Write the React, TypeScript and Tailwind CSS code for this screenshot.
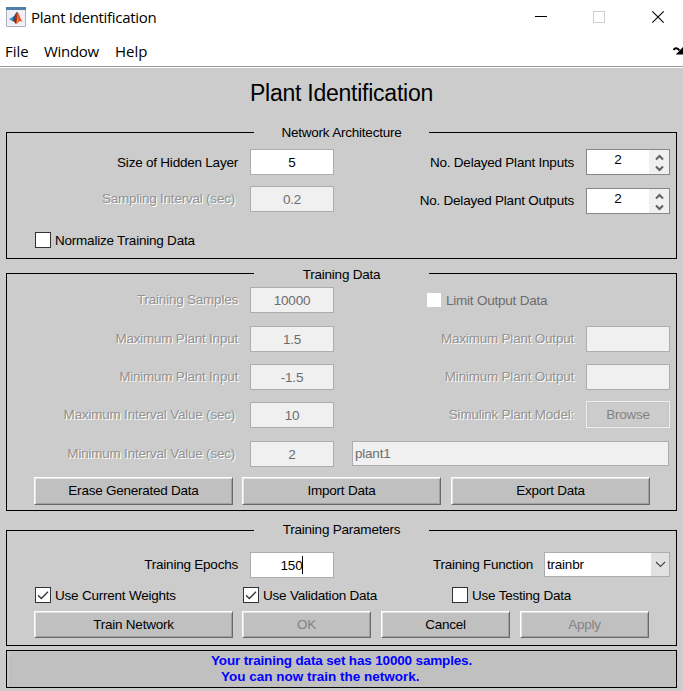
import type { ReactNode } from "react";

function Check({ checked }: { checked?: boolean }) {
  return (
    <span className="flex h-4 w-4 shrink-0 items-center justify-center border border-[#333] bg-white">
      {checked && (
        <svg width="14" height="14" viewBox="0 0 14 14" fill="none" stroke="#333" strokeWidth="1.3">
          <path d="M2 7.2 L5.3 10.5 L12 3.8" />
        </svg>
      )}
    </span>
  );
}

function Option({ checked, className, children }: { checked?: boolean; className: string; children: ReactNode }) {
  return (
    <div className={`flex h-4 items-center gap-1 ${className}`}>
      <Check checked={checked} />
      <span className="pt-px">{children}</span>
    </div>
  );
}

function Label({ off, sec, className = "pr-3", children }: { off?: boolean; sec?: boolean; className?: string; children: ReactNode }) {
  return (
    <span
      className={`flex-1 text-right ${sec ? "pr-[15px]" : className} ${
        off ? "text-[#929292] [text-shadow:1px_1px_0_#fff]" : "pt-px"
      }`}
    >
      {children}
    </span>
  );
}

function Field({ off, children }: { off?: boolean; children?: ReactNode }) {
  return (
    <span
      className={`flex h-[26px] w-[84px] shrink-0 items-center justify-center border border-[#abadb3] pt-px ${
        off ? "bg-[#f0f0f0] text-[#6d6d6d]" : "bg-white"
      }`}
    >
      {children}
    </span>
  );
}

function Row({ className = "", children }: { className?: string; children: ReactNode }) {
  return <div className={`flex h-[26px] items-center ${className}`}>{children}</div>;
}

function Spinner({ value }: { value: string }) {
  return (
    <span className="flex h-[26px] w-[84px] shrink-0 border border-[#828790] bg-white">
      <span className="flex-1 pt-px text-center leading-[18px]">{value}</span>
      <span className="flex w-5 flex-col items-center bg-[#f0f0f0] pt-1">
        <svg width="9" height="18" viewBox="0 0 9 18" fill="none" stroke="#606060" strokeWidth="2">
          <path d="M1 5.5 L4.5 2 L8 5.5 M1 12.5 L4.5 16 L8 12.5" />
        </svg>
      </span>
    </span>
  );
}

function Button({ off, className, children }: { off?: boolean; className: string; children: ReactNode }) {
  return (
    <button
      className={`flex items-center justify-center border border-t-white border-l-white border-r-[#696969] border-b-[#696969] bg-[#c0c0c0] tracking-[-0.24px] shadow-[inset_1px_1px_0_#e3e3e3,inset_-1px_-1px_0_#a0a0a0] ${
        off ? "text-[#838383]" : "text-black"
      } ${className}`}
    >
      {children}
    </button>
  );
}

function Panel({ title, titleClass = "", className, children }: { title: string; titleClass?: string; className: string; children: ReactNode }) {
  return (
    <section className={`mx-[6px] flex w-[671px] flex-col border-x border-b border-black ${className}`}>
      <header className="flex h-px shrink-0 items-center">
        <span className="h-px w-[247px] bg-black" />
        <span className={`w-[175px] text-center ${titleClass}`}>{title}</span>
        <span className="h-px flex-1 bg-black" />
      </header>
      {children}
    </section>
  );
}

export default function App() {
  return (
    <div className="flex h-[691px] w-[683px] flex-col overflow-hidden bg-[#ccc] font-['Liberation_Sans',Arial,sans-serif] text-[13.5px] leading-4 tracking-[-0.22px] text-black">
      <div className="flex h-[34px] shrink-0 items-center bg-white pl-[6px] font-['Open_Sans','Noto_Sans',sans-serif] text-[15px] tracking-[-0.3px]">
        <svg width="20" height="20" viewBox="0 0 20 20">
          <rect x="0.5" y="0.5" width="19" height="19" rx="0.5" fill="#edf1f5" stroke="#a9b2bb" />
          <rect x="0" y="0" width="20" height="3" fill="#4f7fa8" />
          <path d="M3 12 L7.5 9.5 L10 11.5 L6.8 14.5 Z" fill="#3d8ec9" />
          <path d="M7.5 9.5 C9 8.5 9.7 5 11.2 5 L10.2 11.5 L8.5 14.5 L6.8 14 Z" fill="#37486e" />
          <path d="M11.2 5 C12.7 5 14 12 17 15 C15 13.8 13.8 13.7 12.6 15 C11.5 16.3 10.5 17 9.8 17 C9.3 15.4 8.6 14.6 7.4 14.2 C9.4 13.2 10.2 8 11.2 5 Z" fill="#e0521f" />
          <path d="M11.2 5 C10.6 8.5 11.3 13 9.8 17 C9 15.5 8.6 14.6 7.4 14.2 C9.4 13.2 10.3 8 11.2 5 Z" fill="#8d2a1d" />
          <path d="M11.6 8 C12.3 11 12.7 13 12 15 L10.5 16 C11.7 13 11.5 10 11.6 8 Z" fill="#f8a43a" />
        </svg>
        <span className="ml-[5px] flex-1">Plant Identification</span>
        <svg width="150" height="34" viewBox="0 0 150 34" fill="none" shapeRendering="crispEdges">
          <path d="M2 16.5 H14" stroke="#000" />
          <rect x="60.5" y="11.5" width="11" height="11" stroke="#ccc" />
          <path d="M119.3 11.3 L130.7 22.7 M130.7 11.3 L119.3 22.7" stroke="#000" strokeWidth="1.1" shapeRendering="auto" />
        </svg>
      </div>
      <div className="flex h-8 shrink-0 items-center bg-white pt-[2px] pl-[5px] font-['Open_Sans','Noto_Sans',sans-serif] text-[15px] tracking-[-0.3px]">
        <span className="w-[39px] tracking-normal">File</span>
        <span className="w-[71px]">Window</span>
        <span className="flex-1 tracking-normal">Help</span>
        <svg width="10" height="8" viewBox="0 0 10 8">
          <path d="M0.5 3 C2 0.4 4.5 0.8 6.5 3.5" fill="none" stroke="#000" strokeWidth="2" />
          <path d="M10 0 V7.4 H2.8 Z" fill="#000" />
        </svg>
      </div>
      <div className="h-[2px] shrink-0 border-t border-[#999] bg-white" />
      <h1 className="mt-[11px] h-7 shrink-0 text-center text-[23px] leading-7 tracking-[-0.25px]">Plant Identification</h1>

      <Panel title="Network Architecture" className="mt-[25px] h-[127px] shrink-0">
        <div className="flex">
          <div className="w-[327px] pt-4">
            <Row>
              <Label>Size of Hidden Layer</Label>
              <Field>5</Field>
            </Row>
            <Row className="mt-[11px]">
              <Label off sec>Sampling Interval (sec)</Label>
              <Field off>0.2</Field>
            </Row>
          </div>
          <div className="w-[336px] pt-4">
            <Row>
              <Label>No. Delayed Plant Inputs</Label>
              <Spinner value="2" />
            </Row>
            <Row className="mt-[13px]">
              <Label className="-mt-px pr-3">No. Delayed Plant Outputs</Label>
              <Spinner value="2" />
            </Row>
          </div>
        </div>
        <Option className="mt-[18px] ml-7">Normalize Training Data</Option>
      </Panel>

      <Panel title="Training Data" titleClass="pt-[2px]" className="mt-[14px] h-[238px] shrink-0">
        <div className="flex pt-[13px]">
          <div className="w-[327px]">
            <Row>
              <Label off>Training Samples</Label>
              <Field off>10000</Field>
            </Row>
            <Row className="mt-[13px]">
              <Label off>Maximum Plant Input</Label>
              <Field off>1.5</Field>
            </Row>
            <Row className="mt-3">
              <Label off>Minimum Plant Input</Label>
              <Field off>-1.5</Field>
            </Row>
            <Row className="mt-3">
              <Label off sec>Maximum Interval Value (sec)</Label>
              <Field off>10</Field>
            </Row>
            <Row className="mt-[13px]">
              <Label off sec>Minimum Interval Value (sec)</Label>
              <Field off>2</Field>
            </Row>
          </div>
          <div className="w-[336px]">
            <Row className="pl-[93px]">
              <span className="h-[14px] w-[14px] bg-white" />
              <span className="ml-[5px] pt-px text-[#6d6d6d]">Limit Output Data</span>
            </Row>
            <Row className="mt-[13px]">
              <Label off>Maximum Plant Output</Label>
              <Field off />
            </Row>
            <Row className="mt-3">
              <Label off>Minimum Plant Output</Label>
              <Field off />
            </Row>
            <Row className="mt-3">
              <Label off>Simulink Plant Model:</Label>
              <button className="-mt-px flex h-[27px] w-[84px] items-center justify-center border border-[#f0f0f0] tracking-[-0.24px] text-[#838383] shadow-[inset_0_0_0_1px_#c4c4c4]">
                Browse
              </button>
            </Row>
            <div className="mt-[13px] ml-[18px] flex h-[25px] w-[317px] items-center border border-[#abadb3] bg-[#f0f0f0] pl-[2px] text-[#6d6d6d]">
              plant1
            </div>
          </div>
        </div>
        <div className="mt-[10px] ml-[27px] flex">
          <Button className="h-7 w-[199px]">Erase Generated Data</Button>
          <Button className="ml-[9px] h-7 w-[199px]">Import Data</Button>
          <Button className="ml-[10px] h-7 w-[199px]">Export Data</Button>
        </div>
      </Panel>

      <Panel title="Training Parameters" titleClass="pb-[2px]" className="mt-[19px] h-[116px] shrink-0">
        <div className="flex pt-[21px]">
          <Row className="w-[327px]">
            <Label className="-mt-px pr-3">Training Epochs</Label>
            <Field>
              150
              <span className="-mt-px h-[18px] w-px bg-black" />
            </Field>
          </Row>
          <Row className="w-[336px]">
            <Label className="-mt-px pr-[11px]">Training Function</Label>
            <div className="-mt-px flex h-[25px] w-[126px] items-center border border-[#abadb3] bg-white pl-[2px]">
              <span className="flex-1">trainbr</span>
              <span className="flex h-full w-[18px] items-center justify-center bg-[#e1e1e1]">
                <svg width="11" height="7" viewBox="0 0 11 7" fill="none" stroke="#444" strokeWidth="1.1">
                  <path d="M1 1 L5.5 5.5 L10 1" />
                </svg>
              </span>
            </div>
          </Row>
        </div>
        <div className="mt-[9px] ml-7 flex">
          <Option checked className="w-[208px]">Use Current Weights</Option>
          <Option checked className="w-[209px]">Use Validation Data</Option>
          <Option className="w-[150px]">Use Testing Data</Option>
        </div>
        <div className="mt-2 ml-[27px] flex">
          <Button className="h-[27px] w-[199px]">Train Network</Button>
          <Button off className="ml-[9px] h-[27px] w-[129px]">OK</Button>
          <Button className="ml-[10px] h-[27px] w-[129px]">Cancel</Button>
          <Button off className="ml-[10px] h-[27px] w-[129px]">Apply</Button>
        </div>
      </Panel>

      <div className="mx-[6px] mt-1 flex h-[38px] w-[671px] shrink-0 flex-col border border-black bg-[#c0c0c0] pt-[2px] pl-[204px] font-bold text-[#00f] shadow-[inset_2px_1px_0_#c8c8c8]">
        <span className="tracking-[-0.16px]">Your training data set has 10000 samples.</span>
        <span className="pl-[10px] tracking-normal">You can now train the network.</span>
      </div>
    </div>
  );
}
